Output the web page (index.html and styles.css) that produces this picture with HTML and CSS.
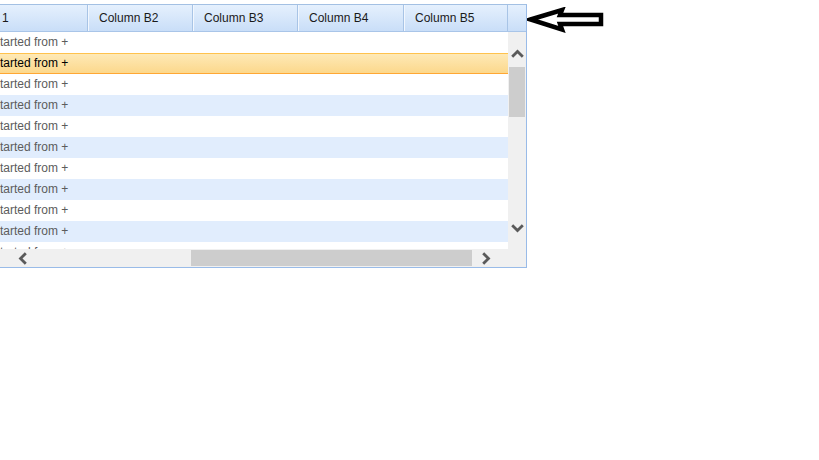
FILE: index.html
```html
<!DOCTYPE html>
<html lang="en">
<head>
    <meta charset="UTF-8">
    <title>Grid</title>
    <link rel="stylesheet" href="styles.css">
</head>
<body>
    <div class="page">
        <div class="grid">
            <div class="header">
                <div class="hcell c1">1</div>
                <div class="hcell c2">Column B2</div>
                <div class="hcell c3">Column B3</div>
                <div class="hcell c4">Column B4</div>
                <div class="hcell c5">Column B5</div>
                <div class="hfill"></div>
            </div>
            <div class="body">
                <div class="rows">
                    <div class="row">tarted from +</div>
                    <div class="row selected">tarted from +</div>
                    <div class="row">tarted from +</div>
                    <div class="row alt">tarted from +</div>
                    <div class="row">tarted from +</div>
                    <div class="row alt">tarted from +</div>
                    <div class="row">tarted from +</div>
                    <div class="row alt">tarted from +</div>
                    <div class="row">tarted from +</div>
                    <div class="row alt">tarted from +</div>
                    <div class="row">tarted from +</div>
                </div>
                <div class="vscroll">
                    <svg class="chev up" width="13" height="9" viewBox="0 0 13 9"><path d="M1.2 7.8 L6.5 2.5 L11.8 7.8" fill="none" stroke="#5a5a5a" stroke-width="2.8"/></svg>
                    <div class="vthumb"></div>
                    <div class="vspace"></div>
                    <svg class="chev down" width="13" height="9" viewBox="0 0 13 9"><path d="M1.2 1.2 L6.5 6.5 L11.8 1.2" fill="none" stroke="#5a5a5a" stroke-width="2.8"/></svg>
                </div>
            </div>
            <div class="hscroll">
                <svg class="chev left" width="9" height="13" viewBox="0 0 9 13"><path d="M7.8 1.2 L2.5 6.5 L7.8 11.8" fill="none" stroke="#5a5a5a" stroke-width="2.8"/></svg>
                <div class="hthumb"></div>
                <svg class="chev right" width="9" height="13" viewBox="0 0 9 13"><path d="M1.2 1.2 L6.5 6.5 L1.2 11.8" fill="none" stroke="#5a5a5a" stroke-width="2.8"/></svg>
                <div class="corner"></div>
            </div>
        </div>
        <svg class="pointer" width="78" height="26" viewBox="0 0 78 26">
            <path d="M3.5 12.5 L35 3 L33 8 L74 8 L74 17 L33 17 L35 22.5 Z" fill="none" stroke="#000" stroke-width="4.5" stroke-linejoin="miter"/>
        </svg>
    </div>
</body>
</html>
```

FILE: styles.css
```css
body {
    margin: 0;
    background-color: #fff;
    font-family: "Liberation Sans", Arial, sans-serif;
    font-size: 12px;
}
.page {
    display: flex;
    align-items: flex-start;
    padding-top: 4px;
}
.grid {
    width: 526px;
    border: 1px solid #99bbe8;
    border-left: none;
    border-top-color: #a3c0e3;
}
.header {
    display: flex;
    height: 26px;
    border-bottom: 1px solid #a9c5e8;
    background: linear-gradient(#e5f0fd, #c9def8);
}
.hcell {
    box-sizing: border-box;
    height: 26px;
    line-height: 27px;
    padding-left: 11px;
    color: #1a1a1a;
    border-right: 1px solid #a8c4e6;
    box-shadow: inset 1px 0 #f2f7fe;
    white-space: nowrap;
}
.c1 {
    width: 88px;
    padding-left: 2px;
    box-shadow: none;
}
.c2, .c3 {
    width: 105px;
}
.c4 {
    width: 106px;
}
.c5 {
    width: 104px;
}
.hfill {
    flex: 1;
}
.body {
    display: flex;
    height: 217px;
    overflow: hidden;
}
.rows {
    flex: 1;
}
.row {
    box-sizing: border-box;
    height: 21px;
    line-height: 21px;
    color: #5c5c5c;
    white-space: nowrap;
}
.row.alt {
    background-color: #e1edfd;
}
.row.selected {
    color: #000;
    border-top: 1px solid #ffc24d;
    border-bottom: 1px solid #ffa733;
    line-height: 19px;
    background: linear-gradient(#fee9b6, #fcd88c);
}
.vscroll {
    width: 18px;
    display: flex;
    flex-direction: column;
    align-items: center;
    background-color: #f0f0f0;
}
.chev {
    display: block;
}
.up {
    margin-top: 17px;
}
.vthumb {
    width: 16px;
    height: 50px;
    margin-top: 9px;
    background-color: #cdcdcd;
}
.vspace {
    flex: 1;
}
.down {
    margin-bottom: 16px;
}
.hscroll {
    display: flex;
    align-items: center;
    height: 18px;
    background-color: #f0f0f0;
}
.left {
    margin-left: 18px;
}
.hthumb {
    width: 281px;
    height: 16px;
    margin-left: 164px;
    background-color: #cdcdcd;
}
.right {
    margin-left: 10px;
}
.corner {
    flex: 1;
}
.pointer {
    display: block;
    margin-top: 3px;
}
```
